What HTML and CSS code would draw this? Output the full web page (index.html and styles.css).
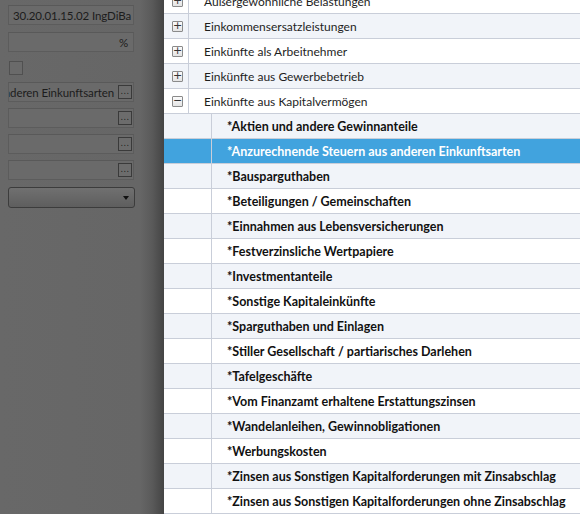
FILE: index.html
```html
<!DOCTYPE html>
<html lang="de">
<head>
    <meta charset="UTF-8">
    <title>Einkunftsarten</title>
    <link rel="stylesheet" href="styles.css">
</head>
<body>
    <div class="form">
        <div class="field"><span class="value">30.20.01.15.02 IngDiBa</span></div>
        <div class="field right"><span class="value">%</span></div>
        <div class="check"></div>
        <div class="field lookup">
            <span class="scroll"><span class="value">anderen Einkunftsarten</span></span>
            <span class="dots">...</span>
        </div>
        <div class="field lookup"><span class="scroll"></span><span class="dots">...</span></div>
        <div class="field lookup"><span class="scroll"></span><span class="dots">...</span></div>
        <div class="field lookup"><span class="scroll"></span><span class="dots">...</span></div>
        <div class="combo"><span class="arrow"></span></div>
    </div>

    <div class="list">
        <div class="row group"><span class="toggle"><i class="box">+</i></span><span class="label">Außergewöhnliche Belastungen</span></div>
        <div class="row group odd"><span class="toggle"><i class="box">+</i></span><span class="label">Einkommensersatzleistungen</span></div>
        <div class="row group"><span class="toggle"><i class="box">+</i></span><span class="label">Einkünfte als Arbeitnehmer</span></div>
        <div class="row group odd"><span class="toggle"><i class="box">+</i></span><span class="label">Einkünfte aus Gewerbebetrieb</span></div>
        <div class="row group"><span class="toggle"><i class="box">&minus;</i></span><span class="label">Einkünfte aus Kapitalvermögen</span></div>
        <div class="row item odd"><span class="indent"></span><span class="label">*Aktien und andere Gewinnanteile</span></div>
        <div class="row item selected"><span class="indent"></span><span class="label">*Anzurechnende Steuern aus anderen Einkunftsarten</span></div>
        <div class="row item odd"><span class="indent"></span><span class="label">*Bausparguthaben</span></div>
        <div class="row item"><span class="indent"></span><span class="label">*Beteiligungen / Gemeinschaften</span></div>
        <div class="row item odd"><span class="indent"></span><span class="label">*Einnahmen aus Lebensversicherungen</span></div>
        <div class="row item"><span class="indent"></span><span class="label">*Festverzinsliche Wertpapiere</span></div>
        <div class="row item odd"><span class="indent"></span><span class="label">*Investmentanteile</span></div>
        <div class="row item"><span class="indent"></span><span class="label">*Sonstige Kapitaleinkünfte</span></div>
        <div class="row item odd"><span class="indent"></span><span class="label">*Sparguthaben und Einlagen</span></div>
        <div class="row item"><span class="indent"></span><span class="label">*Stiller Gesellschaft / partiarisches Darlehen</span></div>
        <div class="row item odd"><span class="indent"></span><span class="label">*Tafelgeschäfte</span></div>
        <div class="row item"><span class="indent"></span><span class="label">*Vom Finanzamt erhaltene Erstattungszinsen</span></div>
        <div class="row item odd"><span class="indent"></span><span class="label">*Wandelanleihen, Gewinnobligationen</span></div>
        <div class="row item"><span class="indent"></span><span class="label">*Werbungskosten</span></div>
        <div class="row item odd"><span class="indent"></span><span class="label">*Zinsen aus Sonstigen Kapitalforderungen mit Zinsabschlag</span></div>
        <div class="row item"><span class="indent"></span><span class="label">*Zinsen aus Sonstigen Kapitalforderungen ohne Zinsabschlag</span></div>
    </div>
</body>
</html>
```

FILE: styles.css
```css
body {
    margin: 0;
    height: 514px;
    overflow: hidden;
    display: flex;
    font-family: Lato, "Open Sans", sans-serif;
    font-size: 12px;
    background-color: #676767;
}
.form {
    flex: none;
    width: 164px;
    padding: 5px 0 0 8px;
    box-sizing: border-box;
    display: flex;
    flex-direction: column;
    background: linear-gradient(to right, #686868 0, #666666 140px, #5a5a5a 152px, #444444 164px);
}
.field {
    width: 126px;
    height: 20px;
    box-sizing: border-box;
    border: 1px solid #5c5c5c;
    border-top-color: #595959;
    background-color: #6a6a6a;
    color: #1c1c1c;
    display: flex;
    align-items: center;
    padding: 0 2px 0 4px;
    margin-bottom: 7px;
    font-size: 11.5px;
    letter-spacing: -0.1px;
    white-space: nowrap;
    overflow: hidden;
}
.field.right { justify-content: flex-end; padding-right: 5px; }
.field.lookup { padding: 0 1px 0 0; margin-bottom: 6px; }
.scroll {
    flex: 1;
    overflow: hidden;
    display: flex;
    justify-content: flex-end;
    white-space: nowrap;
    padding-right: 4px;
}
.dots {
    flex: none;
    width: 14px;
    height: 14px;
    box-sizing: border-box;
    border: 1px solid #3a3a3a;
    background-color: #6c6c6c;
    color: #1a1a1a;
    font-family: "DejaVu Sans", sans-serif;
    font-size: 8px;
    line-height: 12px;
    letter-spacing: 0.5px;
    text-align: center;
}
.check {
    width: 14px;
    height: 14px;
    box-sizing: border-box;
    border: 1px solid #505050;
    background-color: #6a6a6a;
    margin: 2px 0 7px 1px;
}
.combo {
    position: relative;
    width: 127px;
    height: 21px;
    box-sizing: border-box;
    margin-top: 1px;
    border: 1px solid #3c3c3c;
    border-radius: 3px;
    background: linear-gradient(#707070, #5e5e5e);
}
.arrow {
    position: absolute;
    right: 5px;
    top: 8px;
    border-left: 3px solid transparent;
    border-right: 3px solid transparent;
    border-top: 4px solid #111;
}
.list {
    flex: 1;
    margin-top: -11px;
    background-color: #ffffff;
    color: #1e1e1e;
}
.row {
    display: flex;
    height: 25px;
    box-sizing: border-box;
    border-bottom: 1px solid #c9ced9;
    background-color: #ffffff;
}
.row.odd { background-color: #f1f4f9; }
.row.selected { background-color: #41a3de; color: #ffffff; }
.toggle {
    flex: none;
    width: 25px;
    box-sizing: border-box;
    border-right: 1px solid #c9ced9;
    display: flex;
    align-items: center;
    padding-left: 8px;
}
.box {
    width: 11px;
    height: 11px;
    box-sizing: border-box;
    border: 1px solid #8a8a8a;
    border-radius: 1px;
    background: linear-gradient(#fbfbfb, #e4e4e4);
    font-style: normal;
    font-size: 11px;
    line-height: 8px;
    text-align: center;
    color: #333;
    font-family: "DejaVu Sans", sans-serif;
}
.indent {
    flex: none;
    width: 48px;
    box-sizing: border-box;
    border-right: 1px solid #c9ced9;
}
.label {
    display: flex;
    align-items: center;
    padding-left: 15px;
    white-space: nowrap;
}
.row.item .label { font-weight: bold; font-size: 12.5px; color: #111; }
.row.selected .label { color: #ffffff; }
```
